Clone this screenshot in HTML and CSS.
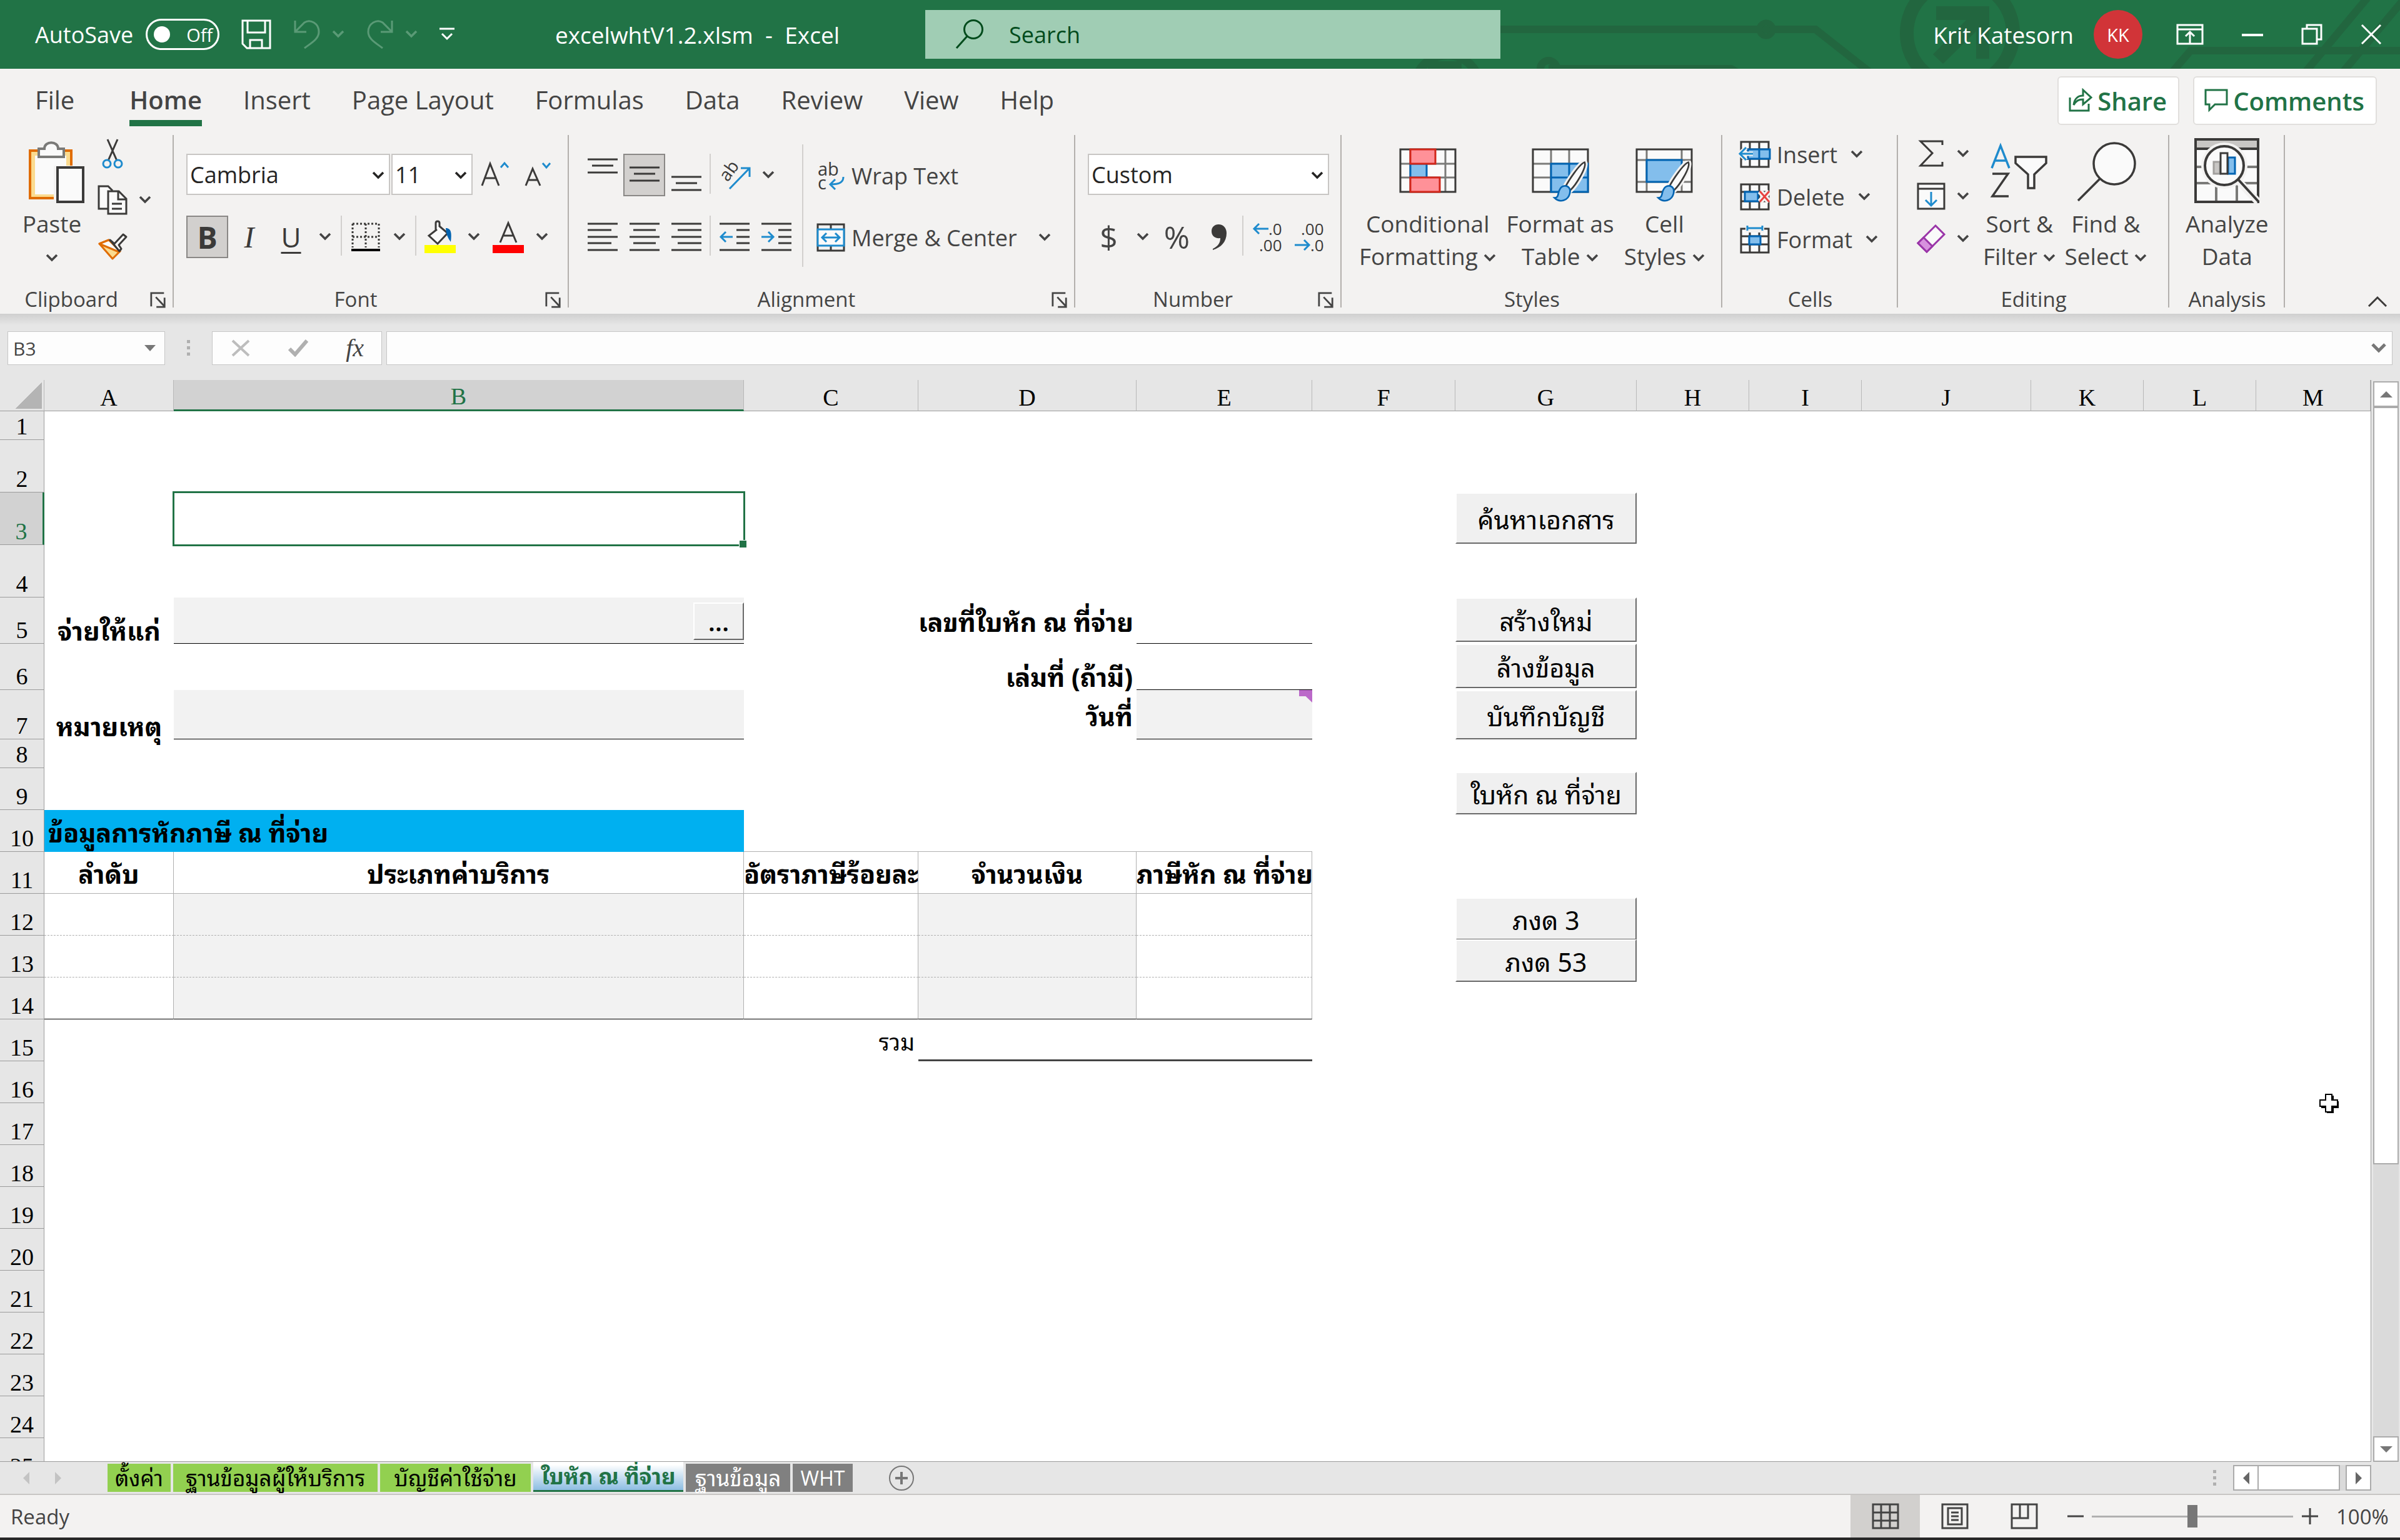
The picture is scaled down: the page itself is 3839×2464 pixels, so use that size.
FILE: index.html
```
<!DOCTYPE html>
<html lang="en">

<head>
  <meta charset="utf-8">
  <meta name="viewport" content="width=device-width">
  <title>excelwhtV1.2.xlsm - Excel</title>
  <link rel="stylesheet" href="styles.css">
</head>

<body>
  <!-- shared icons -->
  <svg class="sprite" aria-hidden="true">
    <symbol id="chev" viewBox="0 0 20 14"><path d="M2 2l8 8 8-8" fill="none" stroke="currentColor" stroke-width="3.6"/></symbol>
    <symbol id="launch" viewBox="0 0 28 28"><path d="M2 25V2H24M10 9l14 15M25 10v16H11" fill="none" stroke="currentColor" stroke-width="3"/></symbol>
    <symbol id="brush" viewBox="0 0 60 80"><path d="M57 3C62 12 40 46 31 54l-9-6C28 36 48 6 57 3z" fill="#fafafa" stroke="#f3f2f1" stroke-width="10"/><path d="M57 3C62 12 40 46 31 54l-9-6C28 36 48 6 57 3z" fill="#fafafa" stroke="#3b3a39" stroke-width="3"/><path d="M22 46c7 1 10 7 8 14-3 13-18 18-28 8 8 0 6-8 9-14 2-5 6-8 11-8z" fill="#83beec" stroke="#0063b1" stroke-width="3"/></symbol>
  </svg>

  <header class="titlebar">
    <svg class="art" viewBox="0 0 1600 110" aria-hidden="true">
      <g fill="none" stroke="#22663f" stroke-width="12">
        <path d="M161 47H424M238 110H530l14 8M449 47H665L755 118"/>
        <circle cx="586" cy="47" r="11" stroke-width="9"/>
        <path d="M153 47H575M597 47h70"/>
        <circle cx="896" cy="53" r="85" stroke-width="22"/>
        <circle cx="76" cy="140" r="52" stroke-width="14"/>
        <path d="M45 105h54" stroke-width="14"/>
        <circle cx="238" cy="110" r="13"/>
        <path d="M1235 116l30-35H1600M1448 116L1550-6M1508 116L1612-8"/>
      </g>
      <path fill="#22663f" d="M858 10h85v84h-21V50l-53 52-16-15 53-55h-48z"/>
    </svg>
    <div class="quick">
      <label class="autosave">AutoSave
        <span class="switch"><input type="checkbox"><i></i>Off</span>
      </label>
      <button class="qbtn" aria-label="Save">
        <svg width="48" height="48" viewBox="0 0 48 48" fill="none" stroke="#fff" stroke-width="3"><path d="M2 2H46V46H9L2 39zM10 2V21H38V2M14 46V33H33V46M10 21h28"/></svg>
      </button>
      <button class="qbtn dim" aria-label="Undo">
        <svg width="44" height="48" viewBox="0 0 44 48" fill="none" stroke="currentColor" stroke-width="3"><path d="M3 2V20H21M3 20L18 5C27-1 41 6 41 20 41 31 30 37 18 46"/></svg>
        <svg class="chev"><use href="#chev"/></svg>
      </button>
      <button class="qbtn dim" aria-label="Redo">
        <svg width="44" height="48" viewBox="0 0 44 48" fill="none" stroke="currentColor" stroke-width="3"><path d="M41 2V20H23M41 20L26 5C17-1 3 6 3 20 3 31 14 37 26 46"/></svg>
        <svg class="chev"><use href="#chev"/></svg>
      </button>
      <button class="qbtn" aria-label="Customize toolbar">
        <svg width="24" height="22" viewBox="0 0 24 22" fill="none" stroke="#fff" stroke-width="3"><path d="M0 2H24M4 10l8 8 8-8"/></svg>
      </button>
      <h1 class="doc-title">excelwhtV1.2.xlsm&nbsp; -&nbsp; Excel</h1>
    </div>
    <label class="search">
      <svg width="46" height="48" viewBox="0 0 46 48" fill="none" stroke="#004b1c" stroke-width="3"><circle cx="29" cy="16" r="14.5"/><path d="M19 27L2 46"/></svg>
      <input type="text" placeholder="Search" aria-label="Search">
    </label>
    <div class="account">
      <span class="user">Krit Katesorn</span>
      <button class="avatar">KK</button>
      <button class="win" aria-label="Ribbon display options"><svg width="44" height="34" viewBox="0 0 44 34" fill="none" stroke="#fff" stroke-width="3"><path d="M2 2H42V32H2zM2 9H42M22 32V15M15 20l7-7 7 7"/></svg></button>
      <button class="win" aria-label="Minimize"><svg width="34" height="34" viewBox="0 0 34 34" stroke="#fff" stroke-width="4"><path d="M0 18H34"/></svg></button>
      <button class="win" aria-label="Restore"><svg width="34" height="34" viewBox="0 0 34 34" fill="none" stroke="#fff" stroke-width="3"><path d="M2 8H25V32H2zM9 8V2H32V25H25"/></svg></button>
      <button class="win" aria-label="Close"><svg width="34" height="34" viewBox="0 0 34 34" stroke="#fff" stroke-width="3"><path d="M2 2L32 32M32 2L2 32"/></svg></button>
    </div>
  </header>

  <nav class="tabs">
    <a href="#" class="file">File</a>
    <a href="#" class="active">Home</a>
    <a href="#">Insert</a>
    <a href="#">Page Layout</a>
    <a href="#">Formulas</a>
    <a href="#">Data</a>
    <a href="#">Review</a>
    <a href="#">View</a>
    <a href="#">Help</a>
    <div class="share">
      <button><svg width="38" height="40" viewBox="0 0 38 40" fill="none" stroke="currentColor" stroke-width="3"><path d="M2 15V36H32V25M8 27C9 17 15 12 23 12V3L36 15 23 26V18C16 18 12 20 8 27z"/></svg>Share</button>
      <button><svg width="38" height="40" viewBox="0 0 38 40" fill="none" stroke="currentColor" stroke-width="3"><path d="M2 3H36V26H17L8 35V26H2z"/></svg>Comments</button>
    </div>
  </nav>

  <div class="ribbon">
    <section class="group clipboard">
      <div class="body">
        <button class="big">
          <svg viewBox="-5 0 104 104" fill="none" stroke-width="4"><path d="M12 20H78V96H12z" fill="#fbdb8f" stroke="#e06c00"/><path d="M20 28H70V90H20z" fill="#fafafa"/><path d="M26 30V17H35C35 4 57 4 57 17H66V30z" fill="#fafafa" stroke="#7a7a78"/><path d="M50 44H99V104H50z" fill="#f3f2f1"/><path d="M56 47H97V102H56z" fill="#fafafa" stroke="#3b3a39"/></svg>
          <span>Paste</span>
          <span><svg class="chev"><use href="#chev"/></svg></span>
        </button>
        <div class="stack">
          <button class="mini" aria-label="Cut"><svg width="48" height="48" viewBox="0 0 48 48" fill="none" stroke-width="3"><path d="M16 1L31 35M32 1L17 35" stroke="#3b3a39"/><circle cx="15" cy="40" r="6" stroke="#1e8bcd"/><circle cx="33" cy="40" r="6" stroke="#1e8bcd"/></svg></button>
          <button class="mini" aria-label="Copy"><svg width="48" height="48" viewBox="0 0 48 48" fill="#fafafa" stroke="#3b3a39" stroke-width="3"><path d="M16 38H2V2H17L24 9"/><path d="M17 10H34L46 22V46H17z"/><path d="M33 10V23H46M23 30H39M23 38H39" fill="none"/></svg><svg class="chev"><use href="#chev"/></svg></button>
          <button class="mini" aria-label="Format painter"><svg width="48" height="44" viewBox="0 0 48 44" stroke-width="3" stroke-linejoin="round"><path d="M3 18L18 12 36 30 24 42z" fill="#fbdb8f" stroke="#e06c00"/><path d="M3 18L18 12 36 30 34 31z" fill="#fafafa" stroke="#e06c00"/><path d="M20 12L27 18 41 3 46 7 34 20 38 26 35 30z" fill="#fafafa" stroke="#3b3a39"/></svg></button>
        </div>
      </div>
      <footer><h2>Clipboard</h2><button class="launch" aria-label="Clipboard settings"><svg><use href="#launch"/></svg></button></footer>
    </section>

    <section class="group font">
      <div class="body rows">
        <div class="row">
          <label class="combo font-name"><select aria-label="Font"><option>Cambria</option></select><svg class="chev"><use href="#chev"/></svg></label>
          <label class="combo font-size"><select aria-label="Font size"><option>11</option></select><svg class="chev"><use href="#chev"/></svg></label>
          <button class="ib" aria-label="Increase font size"><svg width="46" height="46" viewBox="0 0 46 46" fill="none" stroke-width="3"><path d="M2 40L15 5 29 40M7 28H24" stroke="#3b3a39"/><path d="M32 11l6-7 6 7" stroke="#1e8bcd"/></svg></button>
          <button class="ib" aria-label="Decrease font size"><svg width="46" height="46" viewBox="0 0 46 46" fill="none" stroke-width="3"><path d="M5 40L16 13 28 40M9 31H23" stroke="#3b3a39"/><path d="M32 4l6 7 6-7" stroke="#1e8bcd"/></svg></button>
        </div>
        <div class="row">
          <button class="ib on bold">B</button>
          <button class="ib italic">I</button>
          <button class="ib underline">U</button>
          <button class="cb" aria-label="Underline style"><svg class="chev"><use href="#chev"/></svg></button>
          <i class="sep"></i>
          <button class="ib" aria-label="Borders"><svg width="46" height="46" viewBox="0 0 46 46" fill="none" stroke="#3b3a39" stroke-width="3"><path d="M2 2H44M2 23H44M2 2V40M23 2V40M44 2V40" stroke-dasharray="3 3"/><path d="M0 44H46" stroke="#000" stroke-width="4"/></svg></button>
          <button class="cb" aria-label="Border style"><svg class="chev"><use href="#chev"/></svg></button>
          <i class="sep"></i>
          <button class="ib" aria-label="Fill colour"><svg width="50" height="52" viewBox="0 0 50 52"><path d="M20 14L7 24 21 37 37 20 24 9V4c0-4-6-4-6 0v12" fill="#fafafa" stroke="#3b3a39" stroke-width="3"/><path d="M34 12c8 0 10 6 8 22-5-7-7-11-8-22z" fill="#0063b1"/><path d="M0 39H50V52H0z" fill="#ff0"/></svg></button>
          <button class="cb" aria-label="Fill colours"><svg class="chev"><use href="#chev"/></svg></button>
          <button class="ib" aria-label="Font colour"><svg width="50" height="52" viewBox="0 0 50 52"><path d="M12 35L25 4 38 35M17 24H33" fill="none" stroke="#3b3a39" stroke-width="3"/><path d="M0 39H50V52H0z" fill="red"/></svg></button>
          <button class="cb" aria-label="Font colours"><svg class="chev"><use href="#chev"/></svg></button>
        </div>
      </div>
      <footer><h2>Font</h2><button class="launch" aria-label="Font settings"><svg><use href="#launch"/></svg></button></footer>
    </section>

    <section class="group alignment">
      <div class="body">
        <div class="rows">
          <div class="row">
            <button class="ib" aria-label="Top align"><svg class="lines" viewBox="0 0 48 66"><path d="M0 8H48M7 18H41M0 29H48"/></svg></button>
            <button class="ib on" aria-label="Middle align"><svg class="lines" viewBox="0 0 48 66"><path d="M0 21H48M7 31H41M0 42H48"/></svg></button>
            <button class="ib" aria-label="Bottom align"><svg class="lines" viewBox="0 0 48 66"><path d="M0 36H48M7 46H41M0 57H48"/></svg></button>
            <i class="sep"></i>
            <button class="ib" aria-label="Orientation"><svg width="50" height="50" viewBox="0 0 50 50" fill="none" stroke-width="3"><text transform="translate(14 37) rotate(-54)" font-size="28" fill="#3b3a39">ab</text><path d="M17 47L48 15M35 14H49V28" stroke="#1e8bcd"/></svg></button>
            <button class="cb" aria-label="Orientations"><svg class="chev"><use href="#chev"/></svg></button>
          </div>
          <div class="row">
            <button class="ib" aria-label="Align left"><svg class="lines" viewBox="0 0 48 66"><path d="M0 12H48M0 22H38M0 33H48M0 43H38M0 54H48"/></svg></button>
            <button class="ib" aria-label="Center"><svg class="lines" viewBox="0 0 48 66"><path d="M0 12H48M6 22H42M0 33H48M6 43H42M0 54H48"/></svg></button>
            <button class="ib" aria-label="Align right"><svg class="lines" viewBox="0 0 48 66"><path d="M0 12H48M10 22H48M0 33H48M10 43H48M0 54H48"/></svg></button>
            <i class="sep"></i>
            <button class="ib" aria-label="Decrease indent"><svg class="lines" viewBox="0 0 48 66"><path d="M0 12H48M27 22H48M27 33H48M27 43H48M0 54H48"/><path class="arrow" d="M21 33H2M10 25L2 33 10 41"/></svg></button>
            <button class="ib" aria-label="Increase indent"><svg class="lines" viewBox="0 0 48 66"><path d="M0 12H48M27 22H48M27 33H48M27 43H48M0 54H48"/><path class="arrow" d="M0 33H19M11 25L19 33 11 41"/></svg></button>
          </div>
        </div>
        <i class="sep tall"></i>
        <div class="rows wide">
          <button class="text-btn"><svg width="46" height="48" viewBox="0 0 46 48" fill="none" stroke-width="3"><text x="2" y="24" font-size="29" fill="#3b3a39">ab</text><text x="2" y="46" font-size="29" fill="#3b3a39">c</text><path d="M43 26C43 34 38 38 22 38M30 30L22 38 30 46" stroke="#1e8bcd"/></svg>Wrap Text</button>
          <button class="text-btn"><svg width="46" height="46" viewBox="0 0 46 46" fill="none" stroke-width="3"><path d="M2 2H44V44H2zM23 2V10M23 36V44" stroke="#3b3a39"/><path d="M2 10H44V36H2z" fill="#fafafa" stroke="#1e8bcd"/><path d="M10 23H36M16 16L9 23 16 30M30 16L37 23 30 30" stroke="#1e8bcd"/></svg>Merge &amp; Center<svg class="chev"><use href="#chev"/></svg></button>
        </div>
      </div>
      <footer><h2>Alignment</h2><button class="launch" aria-label="Alignment settings"><svg><use href="#launch"/></svg></button></footer>
    </section>

    <section class="group number">
      <div class="body rows">
        <div class="row">
          <label class="combo num-format"><select aria-label="Number format"><option>Custom</option></select><svg class="chev"><use href="#chev"/></svg></label>
        </div>
        <div class="row">
          <button class="ib sym">$</button>
          <button class="cb" aria-label="Currencies"><svg class="chev"><use href="#chev"/></svg></button>
          <button class="ib sym">%</button>
          <button class="ib" aria-label="Comma style"><svg width="26" height="44" viewBox="0 0 26 44"><path d="M12 2c8 0 13 6 13 14 0 14-9 23-22 27v-2c8-4 12-9 12-17C6 25 1 20 1 13 1 6 6 2 12 2z" fill="#3b3a39"/></svg></button>
          <i class="sep"></i>
          <button class="ib" aria-label="Increase decimal"><svg width="48" height="50" viewBox="0 0 48 50" font-size="26" fill="#3b3a39"><text x="26" y="22">.0</text><text x="11" y="48">.00</text><path d="M26 12H3M11 4L3 12 11 20" fill="none" stroke="#1e8bcd" stroke-width="3"/></svg></button>
          <button class="ib" aria-label="Decrease decimal"><svg width="48" height="50" viewBox="0 0 48 50" font-size="26" fill="#3b3a39"><text x="11" y="22">.00</text><text x="26" y="48">.0</text><path d="M1 38H24M16 30L24 38 16 46" fill="none" stroke="#1e8bcd" stroke-width="3"/></svg></button>
        </div>
      </div>
      <footer><h2>Number</h2><button class="launch" aria-label="Number settings"><svg><use href="#launch"/></svg></button></footer>
    </section>

    <section class="group styles">
      <div class="body">
        <button class="big">
          <svg viewBox="0 0 104 104" fill="none" stroke-width="3"><path d="M8 18H96V86H8z" fill="#fafafa"/><path d="M8 41H96M8 63H96M24 18V86M80 18V86" stroke="#7a7a78"/><path d="M8 18H96V86H8z" stroke="#3b3a39"/><path d="M24 41H50V63H24z" fill="#83beec" stroke="#0063b1"/><path d="M24 18H64V41H24zM24 63H71V86H24z" fill="#ff9198" stroke="#d1261a"/></svg>
          <span>Conditional</span>
          <span>Formatting <svg class="chev"><use href="#chev"/></svg></span>
        </button>
        <button class="big">
          <svg viewBox="0 0 104 104" fill="none" stroke-width="3"><path d="M8 18H96V86H8z" fill="#fafafa"/><path d="M8 41H96M8 63H96M37 18V86M66 18V86" stroke="#7a7a78"/><path d="M8 18H96V86H8z" stroke="#3b3a39"/><path d="M37 41H96V86H37z" fill="#83beec" stroke="#0063b1"/><path d="M66 41V86M37 63H96" stroke="#0063b1"/><use href="#brush" x="30" y="36" width="74" height="70"/></svg>
          <span>Format as</span>
          <span>Table <svg class="chev"><use href="#chev"/></svg></span>
        </button>
        <button class="big">
          <svg viewBox="0 0 104 104" fill="none" stroke-width="3"><path d="M8 18H96V86H8z" fill="#fafafa"/><path d="M8 35H96M8 70H96M24 18V86M80 18V86" stroke="#7a7a78"/><path d="M8 18H96V86H8z" stroke="#3b3a39"/><path d="M24 35H80V70H24z" fill="#83beec" stroke="#0063b1"/><use href="#brush" x="30" y="36" width="74" height="70"/></svg>
          <span>Cell</span>
          <span>Styles <svg class="chev"><use href="#chev"/></svg></span>
        </button>
      </div>
      <footer><h2>Styles</h2></footer>
    </section>

    <section class="group cells">
      <div class="body">
        <div class="stack">
          <button class="text-btn"><svg width="50" height="44" viewBox="0 0 50 44" fill="none" stroke-width="3"><path d="M3 2H47V42H3zM3 14H47M3 29H47M17 2V42M32 2V42" fill="#fafafa" stroke="#3b3a39"/><path d="M14 14H49V29H14zM32 14V29" fill="#83beec" stroke="#0063b1"/><path d="M22 21H2M11 11L1 21 11 31" stroke="#f3f2f1" stroke-width="7"/><path d="M22 21H2M11 11L1 21 11 31" stroke="#1e8bcd"/></svg>Insert<svg class="chev"><use href="#chev"/></svg></button>
          <button class="text-btn"><svg width="50" height="44" viewBox="0 0 50 44" fill="none" stroke-width="3"><path d="M3 2H47V42H3zM3 14H47M3 29H47M17 2V42M32 2V42" fill="#fafafa" stroke="#3b3a39"/><path d="M9 14H30V29H9z" fill="#83beec" stroke="#0063b1"/><path d="M33 13L48 30M48 13L33 30" stroke="#f3f2f1" stroke-width="9"/><path d="M33 13L48 30M48 13L33 30" stroke="#e8423f"/></svg>Delete<svg class="chev"><use href="#chev"/></svg></button>
          <button class="text-btn"><svg width="50" height="46" viewBox="0 0 50 46" fill="none" stroke-width="3"><path d="M3 6H47V44H3zM3 18H47M3 31H47M17 6V44M32 6V44" fill="#fafafa" stroke="#3b3a39"/><path d="M10 0H40V12H10z" fill="#f3f2f1"/><path d="M13 1V9M37 1V9M13 5H37" stroke="#1e8bcd"/><path d="M16 18H34V31H16z" fill="#83beec" stroke="#0063b1"/></svg>Format<svg class="chev"><use href="#chev"/></svg></button>
        </div>
      </div>
      <footer><h2>Cells</h2></footer>
    </section>

    <section class="group editing">
      <div class="body">
        <div class="stack">
          <button class="mini" aria-label="AutoSum"><svg width="46" height="44" viewBox="0 0 46 44" fill="none" stroke="#3b3a39" stroke-width="3"><path d="M41 8V2H6L25 21 6 41H41V35"/></svg><svg class="chev"><use href="#chev"/></svg></button>
          <button class="mini" aria-label="Fill"><svg width="46" height="44" viewBox="0 0 46 44" fill="none" stroke="#3b3a39" stroke-width="3"><path d="M2 2H44V42H2zM2 10H44" fill="#fafafa"/><path d="M23 15V36M14 28L23 37 32 28" stroke="#1e8bcd"/></svg><svg class="chev"><use href="#chev"/></svg></button>
          <button class="mini" aria-label="Clear"><svg width="46" height="46" viewBox="0 0 46 46" stroke="#9a35a8" stroke-width="3"><path d="M30 2L44 16 16 44 2 30z" fill="#fafafa"/><path d="M11 21L25 35 16 44 2 30z" fill="#d792de"/></svg><svg class="chev"><use href="#chev"/></svg></button>
        </div>
        <button class="big">
          <svg viewBox="0 0 104 104" fill="none" stroke-width="3.5"><path d="M8 48L22 12 36 48M13 36H31" stroke="#1e8bcd"/><path d="M9 57H34L9 93H35" stroke="#3b3a39"/><path d="M46 30H95V40L76 58V80H66V58L46 40z" fill="#fafafa" stroke="#3b3a39"/></svg>
          <span>Sort &amp;</span>
          <span>Filter <svg class="chev"><use href="#chev"/></svg></span>
        </button>
        <button class="big">
          <svg viewBox="0 0 104 104" stroke="#3b3a39" stroke-width="3.5"><circle cx="66" cy="41" r="33" fill="#fafafa"/><path d="M43 65L8 100"/></svg>
          <span>Find &amp;</span>
          <span>Select <svg class="chev"><use href="#chev"/></svg></span>
        </button>
      </div>
      <footer><h2>Editing</h2></footer>
    </section>

    <section class="group analysis">
      <div class="body">
        <button class="big">
          <svg viewBox="0 0 104 104" fill="none" stroke-width="4"><path d="M2 2H102V102H2z" fill="#fafafa"/><path d="M2 2H102V17H2z" fill="#c8c6c4"/><path d="M2 46H102M2 72H102M35 72V102M68 72V102" stroke="#7a7a78"/><path d="M2 17H102M2 2H102V102H2z" stroke="#3b3a39"/><circle cx="48" cy="44" r="37" fill="#f3f2f1"/><path d="M68 66L102 102" stroke="#f3f2f1" stroke-width="12"/><circle cx="48" cy="44" r="31" fill="#fafafa" stroke="#3b3a39"/><path d="M70 66L103 102" stroke="#3b3a39"/><path d="M31 38H41V57H31z" fill="#c8c6c4" stroke="#a19f9d" stroke-width="3"/><path d="M54 31H65V57H54z" fill="#83beec" stroke="#0063b1" stroke-width="3"/><path d="M42 24H53V57H42z" fill="#fafafa" stroke="#3b3a39" stroke-width="3"/></svg>
          <span>Analyze</span>
          <span>Data</span>
        </button>
      </div>
      <footer><h2>Analysis</h2></footer>
    </section>
    <button class="collapse" aria-label="Collapse the ribbon"><svg width="32" height="20" viewBox="0 0 32 20" fill="none" stroke="#3b3a39" stroke-width="3"><path d="M2 18L16 4 30 18"/></svg></button>
  </div>

  <div class="formula">
    <label class="name-box"><input type="text" value="B3" aria-label="Name box"><svg width="18" height="10" viewBox="0 0 18 10"><path d="M0 0H18L9 10z" fill="#777"/></svg></label>
    <span class="grip"></span>
    <div class="fx">
      <button aria-label="Cancel"><svg width="30" height="28" viewBox="0 0 30 28" fill="none" stroke="#bdbdbd" stroke-width="4"><path d="M2 2L28 26M28 2L2 26"/></svg></button>
      <button aria-label="Enter"><svg width="32" height="28" viewBox="0 0 32 28" fill="none" stroke="#b0b0b0" stroke-width="6"><path d="M2 15L11 24 30 2"/></svg></button>
      <button class="fn">fx</button>
    </div>
    <label class="formula-box"><input type="text" aria-label="Formula bar"><svg width="26" height="18" viewBox="0 0 26 18" fill="none" stroke="#777" stroke-width="5"><path d="M3 3L13 13 23 3"/></svg></label>
  </div>

  <main class="workspace">
    <div class="sheet">
      <table>
        <colgroup>
          <col class="c-head"><col class="c-a"><col class="c-b"><col class="c-c"><col class="c-d"><col class="c-e"><col class="c-f"><col class="c-g"><col class="c-std"><col class="c-std"><col class="c-j"><col class="c-std"><col class="c-std"><col>
        </colgroup>
        <thead>
          <tr><th class="corner"></th><th>A</th><th class="sel">B</th><th>C</th><th>D</th><th>E</th><th>F</th><th>G</th><th>H</th><th>I</th><th>J</th><th>K</th><th>L</th><th>M</th></tr>
        </thead>
        <tbody>
          <tr class="h46"><th>1</th><td colspan="13"></td></tr>
          <tr class="h84"><th>2</th><td colspan="13"></td></tr>
          <tr class="h84"><th class="sel">3</th><td></td><td class="cursor"></td><td colspan="4"></td><td><button class="form-btn">ค้นหาเอกสาร</button></td><td colspan="6"></td></tr>
          <tr class="h84"><th>4</th><td colspan="13"></td></tr>
          <tr class="h74"><th>5</th><td class="label center">จ่ายให้แก่</td><td class="fill line pick"><button class="form-btn">...</button></td><td></td><td class="label right mid">เลขที่ใบหัก ณ ที่จ่าย</td><td class="line"></td><td></td><td><button class="form-btn">สร้างใหม่</button></td><td colspan="6"></td></tr>
          <tr class="h74"><th>6</th><td></td><td></td><td></td><td class="label right">เล่มที่ (ถ้ามี)</td><td class="line"></td><td></td><td><button class="form-btn">ล้างข้อมูล</button></td><td colspan="6"></td></tr>
          <tr class="h79"><th>7</th><td class="label center">หมายเหตุ</td><td class="fill line"></td><td></td><td class="label right mid">วันที่</td><td class="fill line note"></td><td></td><td><button class="form-btn">บันทึกบัญชี</button></td><td colspan="6"></td></tr>
          <tr class="h46"><th>8</th><td colspan="13"></td></tr>
          <tr class="h67"><th>9</th><td colspan="6"></td><td><button class="form-btn low">ใบหัก ณ ที่จ่าย</button></td><td colspan="6"></td></tr>
          <tr class="h67"><th>10</th><td class="banner label mid" colspan="2">ข้อมูลการหักภาษี ณ ที่จ่าย</td><td class="rule"></td><td class="rule"></td><td class="rule"></td><td colspan="8"></td></tr>
          <tr class="h67 heads"><th>11</th><td>ลำดับ</td><td>ประเภทค่าบริการ</td><td>อัตราภาษีร้อยละ</td><td>จำนวนเงิน</td><td>ภาษีหัก ณ ที่จ่าย</td><td colspan="8"></td></tr>
          <tr class="h67 item"><th>12</th><td></td><td class="fill"></td><td></td><td class="fill"></td><td></td><td></td><td><button class="form-btn low">ภงด 3</button></td><td colspan="6"></td></tr>
          <tr class="h67 item"><th>13</th><td></td><td class="fill"></td><td></td><td class="fill"></td><td></td><td></td><td><button class="form-btn low">ภงด 53</button></td><td colspan="6"></td></tr>
          <tr class="h67 item last"><th>14</th><td></td><td class="fill"></td><td></td><td class="fill"></td><td></td><td colspan="8"></td></tr>
          <tr class="h67"><th>15</th><td></td><td></td><td class="total right mid">รวม</td><td class="line heavy"></td><td class="line heavy"></td><td colspan="8"></td></tr>
          <tr class="h67"><th>16</th><td colspan="13"></td></tr>
          <tr class="h67"><th>17</th><td colspan="13"></td></tr>
          <tr class="h67"><th>18</th><td colspan="13"></td></tr>
          <tr class="h67"><th>19</th><td colspan="13"></td></tr>
          <tr class="h67"><th>20</th><td colspan="13"></td></tr>
          <tr class="h67"><th>21</th><td colspan="13"></td></tr>
          <tr class="h67"><th>22</th><td colspan="13"></td></tr>
          <tr class="h67"><th>23</th><td colspan="13"></td></tr>
          <tr class="h67"><th>24</th><td colspan="13"></td></tr>
          <tr class="h67"><th>25</th><td colspan="13"></td></tr>
        </tbody>
      </table>
      <svg class="pointer" width="32" height="32" viewBox="0 0 32 32" aria-hidden="true"><path d="M12 3H23V12H31V23H23V31H12V23H3V12H12z" fill="#000"/><path d="M10 1H20V10H29V20H20V29H10V20H1V10H10z" fill="#fff" stroke="#000" stroke-width="2"/></svg>
    </div>
    <div class="vscroll">
      <button aria-label="Scroll up"><svg width="20" height="10" viewBox="0 0 20 10"><path d="M0 10H20L10 0z" fill="#777"/></svg></button>
      <div class="track"><div class="thumb"></div></div>
      <button aria-label="Scroll down"><svg width="20" height="10" viewBox="0 0 20 10"><path d="M0 0H20L10 10z" fill="#777"/></svg></button>
    </div>
  </main>

  <div class="sheetbar">
    <div class="sheet-nav">
      <button aria-label="Previous sheet"><svg width="10" height="20" viewBox="0 0 10 20"><path d="M10 0V20L0 10z" fill="#c3c3c3"/></svg></button>
      <button aria-label="Next sheet"><svg width="10" height="20" viewBox="0 0 10 20"><path d="M0 0V20L10 10z" fill="#c3c3c3"/></svg></button>
    </div>
    <button class="sheet-tab t1">ตั้งค่า</button>
    <button class="sheet-tab t2">ฐานข้อมูลผู้ให้บริการ</button>
    <button class="sheet-tab t3">บัญชีค่าใช้จ่าย</button>
    <button class="sheet-tab t4 current">ใบหัก ณ ที่จ่าย</button>
    <button class="sheet-tab t5 grey">ฐานข้อมูล</button>
    <button class="sheet-tab t6 grey">WHT</button>
    <button class="add" aria-label="New sheet"><svg width="42" height="42" viewBox="0 0 42 42" fill="none" stroke="#777"><circle cx="21" cy="21" r="19" stroke-width="2"/><path d="M21 11V31M11 21H31" stroke-width="4"/></svg></button>
    <span class="grip"></span>
    <div class="hscroll">
      <button aria-label="Scroll left"><svg width="10" height="20" viewBox="0 0 10 20"><path d="M10 0V20L0 10z" fill="#666"/></svg></button>
      <div class="thumb"></div>
      <button aria-label="Scroll right"><svg width="10" height="20" viewBox="0 0 10 20"><path d="M0 0V20L10 10z" fill="#666"/></svg></button>
    </div>
  </div>

  <footer class="status">
    <span>Ready</span>
    <div class="views">
      <button class="on" aria-label="Normal"><svg width="44" height="42" viewBox="0 0 44 42"><path d="M2 2H42V40H2zM2 15H42M2 28H42M15 2V40M29 2V40"/></svg></button>
      <button aria-label="Page layout"><svg width="44" height="42" viewBox="0 0 44 42"><path d="M2 2H42V40H2zM11 8H33V34H11zM16 15H28M16 21H28M16 27H28"/></svg></button>
      <button aria-label="Page break preview"><svg width="44" height="42" viewBox="0 0 44 42"><path d="M2 2H42V40H2zM2 24H28V2M15 2V24"/></svg></button>
    </div>
    <button class="zoom-btn" aria-label="Zoom out"><svg width="26" height="26" viewBox="0 0 26 26"><path d="M0 13H26"/></svg></button>
    <input class="zoom" type="range" min="0" max="100" value="50" aria-label="Zoom">
    <button class="zoom-btn" aria-label="Zoom in"><svg width="26" height="26" viewBox="0 0 26 26"><path d="M0 13H26M13 0V26"/></svg></button>
    <span class="percent">100%</span>
  </footer>
</body>

</html>
```

FILE: styles.css
```
* {
  box-sizing: border-box;
}

body {
  margin: 0;
  height: 100vh;
  display: flex;
  flex-direction: column;
  overflow: hidden;
  background: #f3f2f1;
  color: #444;
  font-family: "Open Sans", "Noto Sans", sans-serif;
  font-size: 36px;
}

button,
input,
select {
  margin: 0;
  padding: 0;
  border: 0;
  border-radius: 0;
  background: none;
  color: inherit;
  font: inherit;
}

h1,
h2 {
  margin: 0;
  font-weight: 400;
}

svg {
  display: block;
  flex: none;
}

.sprite {
  position: absolute;
  width: 0;
  height: 0;
}

.chev {
  width: 20px;
  height: 14px;
}

/* Title bar */
.titlebar {
  position: relative;
  flex: none;
  display: grid;
  grid-template-columns: 1480fr 920fr 1439fr;
  align-items: center;
  height: 110px;
  background: #217346;
  color: #fff;
}

.art {
  position: absolute;
  top: 0;
  right: 0;
  width: 1600px;
  height: 110px;
}

.quick {
  display: flex;
  align-items: center;
  padding-left: 56px;
}

.autosave {
  display: flex;
  align-items: center;
  gap: 20px;
}

.switch {
  display: flex;
  align-items: center;
  gap: 26px;
  width: 118px;
  height: 50px;
  padding-left: 10px;
  border: 3px solid #fff;
  border-radius: 25px;
  font-size: 29px;
}

.switch input {
  position: absolute;
  opacity: 0;
}

.switch i {
  width: 26px;
  height: 26px;
  border-radius: 50%;
  background: #fff;
}

.qbtn {
  display: flex;
  align-items: center;
  gap: 18px;
  margin-left: 35px;
}

.qbtn.dim {
  color: #5a9a76;
}

.doc-title {
  margin-left: auto;
  margin-right: 137px;
  font-size: 37px;
}

.search {
  position: relative;
  display: flex;
  align-items: center;
  gap: 40px;
  height: 78px;
  padding-left: 48px;
  background: #a0cdb4;
}

.search input {
  flex: 1;
  outline: 0;
}

.search input::placeholder {
  color: #004b1c;
  opacity: 1;
}

.account {
  position: relative;
  display: flex;
  align-items: center;
  justify-content: flex-end;
  padding-right: 29px;
}

.user {
  font-size: 37px;
}

.avatar {
  width: 78px;
  height: 78px;
  margin: 0 54px 0 32px;
  border-radius: 50%;
  background: #d13438;
  font-size: 29px;
}

.win {
  display: flex;
  align-items: center;
}

.win + .win {
  margin-left: 61px;
}

/* Ribbon tabs */
.tabs {
  flex: none;
  display: flex;
  align-items: center;
  gap: 66px;
  height: 102px;
  padding: 0 37px 0 56px;
  font-size: 40px;
}

.tabs a {
  height: 62px;
  line-height: 60px;
  color: inherit;
  text-decoration: none;
}

.tabs .file {
  margin-right: 22px;
}

.tabs .active {
  border-bottom: 10px solid #217346;
  height: 82px;
  line-height: 80px;
  font-weight: 600;
}

.share {
  display: flex;
  gap: 22px;
  margin-left: auto;
}

.share button {
  display: flex;
  align-items: center;
  gap: 8px;
  height: 78px;
  padding: 0 18px 0 16px;
  border: 2px solid #e1dfdd;
  border-radius: 6px;
  background: #fff;
  color: #217346;
  font-weight: 600;
}

/* Ribbon */
.ribbon {
  flex: none;
  display: flex;
  height: 290px;
}

.ribbon svg {
  overflow: visible;
}

.group {
  position: relative;
  flex: none;
  display: flex;
  flex-direction: column;
  padding-left: 20px;
}

.group::after {
  content: "";
  position: absolute;
  top: 4px;
  right: 0;
  bottom: 10px;
  width: 2px;
  background: #b3b0ad;
}

.clipboard {
  width: 278px;
}

.font {
  width: 632px;
}

.alignment {
  width: 810px;
}

.number {
  width: 426px;
}

.styles {
  width: 609px;
}

.cells {
  width: 281px;
}

.editing {
  width: 434px;
}

.analysis {
  width: 185px;
}

.body {
  flex: 1;
  display: flex;
}

.group footer {
  display: flex;
  height: 44px;
  margin-left: -20px;
}

.group h2 {
  flex: 1;
  font-size: 33px;
  line-height: 42px;
  text-align: center;
}

.launch {
  width: 50px;
  padding-left: 12px;
}

.launch svg {
  width: 26px;
  height: 26px;
}

.body.rows {
  flex-direction: column;
}

.rows {
  display: flex;
  flex-direction: column;
  gap: 31px;
  padding-top: 34px;
}

.row {
  display: flex;
  height: 68px;
}

.stack {
  display: flex;
  flex-direction: column;
}

.ib,
.cb,
.mini {
  display: flex;
  align-items: center;
  justify-content: center;
}

.ib {
  width: 67px;
  height: 68px;
}

.cb {
  width: 42px;
}

.mini {
  justify-content: flex-start;
  gap: 18px;
  height: 68px;
}

.ib.on {
  border: 2px solid #8a8886;
  background: #d2d0ce;
}

.bold,
.italic,
.underline {
  font-size: 48px;
  color: #3b3a39;
}

.bold {
  font-weight: 700;
}

.italic {
  font-family: "Liberation Serif", serif;
  font-style: italic;
}

.underline {
  text-decoration: underline;
  text-decoration-thickness: 3px;
  text-underline-offset: 7px;
  font-size: 44px;
}

.sym {
  font-size: 50px;
}

.sep {
  width: 2px;
  height: 64px;
  margin: 0 4px;
  background: #d2d0ce;
}

.sep.tall {
  height: 196px;
  margin: 19px 4px 0 8px;
}

.lines {
  width: 48px;
  height: 66px;
  fill: none;
  stroke: #3b3a39;
  stroke-width: 3;
}

.lines .arrow {
  stroke: #1e8bcd;
}

.combo {
  position: relative;
  height: 66px;
  margin-right: 2px;
  border: 2px solid #c8c6c4;
  background: #fff;
  color: #252423;
}

.combo select {
  width: 100%;
  height: 100%;
  padding-left: 4px;
  appearance: none;
}

.combo .chev {
  position: absolute;
  top: 26px;
  right: 7px;
}

.font-name {
  width: 326px;
}

.font-size {
  width: 130px;
}

.num-format {
  width: 386px;
}

.text-btn {
  display: flex;
  align-items: center;
  gap: 10px;
  height: 68px;
  padding-top: 2px;
}

.text-btn .chev {
  margin-left: 11px;
}

.wide {
  padding-left: 17px;
}

.wide .chev {
  margin-left: 24px;
}

.big {
  display: flex;
  flex-direction: column;
  align-items: center;
  justify-content: flex-start;
  padding-top: 9px;
  font-size: 37px;
  line-height: 52px;
}

.big > svg {
  width: 104px;
  height: 104px;
  margin-bottom: 7px;
}

.big .chev {
  display: inline-block;
  vertical-align: 4px;
}

.clipboard .stack {
  padding-left: 10px;
  gap: 6px;
}

.clipboard .big {
  width: 126px;
}

.styles .body {
  gap: 16px;
  padding-left: 8px;
}

.cells .body {
  padding-left: 7px;
}

.editing .body {
  gap: 14px;
  padding-left: 10px;
}

.editing .stack {
  width: 92px;
}

.analysis .body {
  padding-left: 6px;
}

.collapse {
  align-self: flex-end;
  margin: 0 20px 10px auto;
}

/* Formula bar */
.formula {
  flex: none;
  display: flex;
  align-items: flex-start;
  height: 106px;
  padding: 28px 12px 0;
  background: linear-gradient(#cfcfcf, #e6e6e6 18px);
  color: #444;
}

.name-box,
.fx,
.formula-box {
  display: flex;
  align-items: center;
  height: 54px;
  border: 1px solid #c6c6c6;
  background: #fdfdfd;
}

.name-box {
  width: 252px;
  padding: 0 14px 0 8px;
  font-size: 30px;
}

.name-box input {
  flex: 1;
  min-width: 0;
}

.grip {
  align-self: center;
  width: 5px;
  height: 26px;
  background: repeating-linear-gradient(#b0b0b0 0 5px, transparent 5px 10px);
}

.formula .grip {
  align-self: flex-start;
  margin: 14px 35px;
}

.fx {
  justify-content: space-between;
  width: 272px;
  padding: 0 28px 0 30px;
}

.fn {
  font-family: "Liberation Serif", serif;
  font-style: italic;
  font-size: 40px;
  line-height: 50px;
}

.formula-box {
  flex: 1;
  margin-left: 7px;
  padding-right: 8px;
}

.formula-box input {
  flex: 1;
}

/* Worksheet */
.workspace {
  flex: 1;
  min-height: 0;
  display: flex;
  background: #e6e6e6;
}

.sheet {
  position: relative;
  flex: 1;
  min-width: 0;
  overflow: hidden;
  border-right: 1px solid #9b9b9b;
  border-bottom: 1px solid #9b9b9b;
  background: #fff;
}

.sheet table {
  width: 100%;
  table-layout: fixed;
  border-spacing: 0;
  color: #000;
}

.c-head {
  width: 71px;
}

.c-a {
  width: 207px;
}

.c-b {
  width: 912px;
}

.c-c {
  width: 279px;
}

.c-d {
  width: 349px;
}

.c-e {
  width: 281px;
}

.c-f {
  width: 229px;
}

.c-g {
  width: 290px;
}

.c-std {
  width: 180px;
}

.c-j {
  width: 271px;
}

.sheet th {
  padding: 0;
  border: solid #9b9b9b;
  border-width: 0 1px 1px 0;
  background: #e6e6e6;
  font: 38px/42px "Liberation Serif", serif;
  text-align: center;
  vertical-align: bottom;
}

.sheet thead th {
  height: 50px;
  border-right-color: #b8b8b8;
}

.sheet thead .corner {
  background: linear-gradient(to bottom right, transparent 50%, #b4b4b4 50%) 25px 4px / 42px 42px no-repeat #e6e6e6;
}

.sheet th.sel {
  background: #d2d2d2;
  color: #217346;
}

.sheet thead th.sel {
  border-bottom: 3px solid #217346;
}

.sheet tbody th.sel {
  border-right: 3px solid #217346;
}

.sheet td {
  position: relative;
  padding: 0;
  vertical-align: top;
  white-space: nowrap;
}

.h46 {
  height: 46px;
}

.h67 {
  height: 67px;
}

.h74 {
  height: 74px;
}

.h79 {
  height: 79px;
}

.h84 {
  height: 84px;
}

.sheet .label,
.heads td,
.sheet .total {
  font-family: "Noto Sans Thai Looped", "Noto Sans Thai", "Noto Sans", sans-serif;
  font-size: 41px;
  line-height: 46px;
  font-weight: 700;
}

.sheet .label {
  vertical-align: bottom;
}

.sheet .total {
  font-size: 36px;
  font-weight: 400;
}

.sheet .center,
.heads td {
  text-align: center;
}

.sheet .right {
  padding-right: 6px;
  text-align: right;
}

.sheet .mid,
.heads td {
  vertical-align: middle;
}

.sheet .fill {
  background: #f2f2f2;
}

.sheet .line {
  border-bottom: 1px solid #000;
}

.sheet .line.heavy {
  border-bottom-width: 3px;
  border-bottom-color: #444;
}

.sheet .banner {
  padding-left: 6px;
  background: #00b0f0;
}

.sheet .rule {
  border-bottom: 1px solid #b0b0b0;
}

.heads td,
.item td {
  border-bottom: 1px solid #b0b0b0;
  border-right: 1px solid #b0b0b0;
}

.item td {
  border-bottom: 1px dashed #b0b0b0;
}

.item.last td {
  border-bottom: 1px solid #000;
}

.heads td:nth-child(n + 7),
.item td:nth-child(n + 7) {
  border: 0;
}

.cursor::before {
  content: "";
  position: absolute;
  inset: -2px;
  z-index: 1;
  border: 3px solid #217346;
}

.cursor::after {
  content: "";
  position: absolute;
  right: -4px;
  bottom: -4px;
  z-index: 2;
  width: 11px;
  height: 11px;
  border: solid #fff;
  border-width: 1px 0 0 1px;
  background: #217346;
}

.note::after {
  content: "";
  position: absolute;
  top: 0;
  right: 0;
  width: 21px;
  height: 20px;
  background: #bb69c9;
  clip-path: polygon(0 0, 100% 0, 100% 100%, 50% 50%, 0 50%);
}

.form-btn {
  display: block;
  width: 100%;
  height: 71px;
  border: 2px solid;
  border-color: #fff #696969 #696969 #fff;
  background: #f0f0f0;
  font-family: "Noto Sans Thai Looped", "Noto Sans Thai", "Noto Sans", sans-serif;
  font-size: 41px;
  line-height: 50px;
}

.h84 .form-btn {
  height: 82px;
}

.h79 .form-btn {
  height: 79px;
}

/* controls anchored below the row edge */
.form-btn.low {
  position: absolute;
  top: 6px;
  left: 0;
  z-index: 1;
  height: 68px;
}

.pick .form-btn {
  width: 81px;
  height: 60px;
  margin: 8px 0 0 auto;
  font-family: "Open Sans", sans-serif;
  font-weight: 600;
}

.pointer {
  position: absolute;
  top: 1142px;
  right: 50px;
}

.vscroll {
  display: flex;
  flex-direction: column;
  width: 46px;
  padding: 2px 2px 0 3px;
}

.vscroll button,
.hscroll button,
.thumb {
  display: flex;
  align-items: center;
  justify-content: center;
  border: 2px solid #ababab;
  background: #fff;
}

.vscroll button {
  height: 41px;
}

.track {
  flex: 1;
  background: #dadada;
}

.vscroll .thumb {
  height: 73.6%;
}

/* Sheet tabs */
.sheetbar {
  flex: none;
  display: flex;
  align-items: center;
  height: 53px;
  padding-right: 46px;
  border-bottom: 2px solid #c8c6c4;
  background: #e6e6e6;
}

.sheet-nav {
  display: flex;
  gap: 41px;
  width: 172px;
  padding-left: 37px;
}

.sheet-tab {
  height: 45px;
  margin-right: 4px;
  background: #92d050;
  color: #000;
  font-family: "Open Sans", "Noto Sans Thai Looped", "Noto Sans Thai", sans-serif;
  font-size: 35px;
  line-height: 42px;
  white-space: nowrap;
}

.t1 {
  width: 101px;
}

.t2 {
  width: 327px;
}

.t3 {
  width: 241px;
}

.t4 {
  width: 240px;
}

.t5 {
  width: 167px;
}

.t6 {
  width: 96px;
  font-size: 32px;
}

.sheet-tab.current {
  align-self: flex-start;
  height: 48px;
  border-bottom: 3px solid #217346;
  background: linear-gradient(#fff 10%, #8dbde2);
  color: #217346;
  font-weight: 700;
}

.sheet-tab.grey {
  background: #808080;
  color: #fff;
}

.add {
  margin-left: 53px;
}

.sheetbar .grip {
  margin-left: auto;
}

.hscroll {
  display: flex;
  width: 221px;
  height: 41px;
  margin-left: 27px;
  background: #dadada;
}

.hscroll button {
  width: 41px;
}

.hscroll .thumb {
  width: 130px;
  margin-right: auto;
  border-left: 0;
}

/* Status bar */
.status {
  flex: none;
  display: flex;
  align-items: center;
  height: 72px;
  padding: 0 22px 0 17px;
  border-bottom: 4px solid #262626;
  font-size: 33px;
}

.views {
  display: flex;
  align-self: stretch;
  margin-left: auto;
}

.views button {
  display: flex;
  align-items: center;
  justify-content: center;
  width: 111px;
}

.views .on {
  background: #d2d0ce;
}

.status svg {
  fill: none;
  stroke: #444;
  stroke-width: 3;
}

.zoom-btn {
  margin-left: 14px;
}

.zoom {
  width: 322px;
  height: 36px;
  margin: 0 0 0 13px;
  appearance: none;
  background: linear-gradient(#b0b0b0, #b0b0b0) center / 100% 3px no-repeat;
}

.zoom::-webkit-slider-thumb {
  appearance: none;
  width: 16px;
  height: 36px;
  background: #777;
}

.percent {
  width: 80px;
  margin-left: 29px;
  text-align: right;
}
```
